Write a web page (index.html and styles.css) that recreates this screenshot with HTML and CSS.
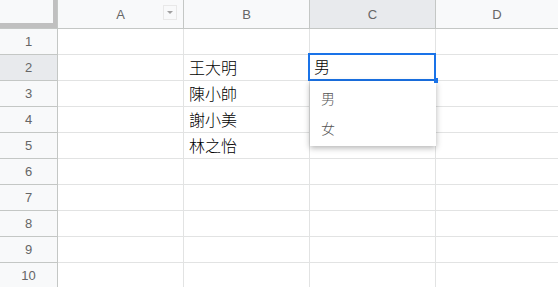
FILE: index.html
```html
<!DOCTYPE html>
<html lang="zh-Hant">
<head>
    <meta charset="UTF-8">
    <meta name="viewport" content="width=device-width, initial-scale=1.0">
    <title>Sheet</title>
    <link rel="stylesheet" href="styles.css">
</head>
<body>
    <div class="sheet">
        <!-- column headers -->
        <div class="corner"></div>
        <div class="col-head">A<span class="filter-btn"></span></div>
        <div class="col-head">B</div>
        <div class="col-head active">C</div>
        <div class="col-head last">D</div>

        <!-- row 1 -->
        <div class="row-head">1</div>
        <div class="cell"></div>
        <div class="cell"></div>
        <div class="cell"></div>
        <div class="cell last"></div>

        <!-- row 2 -->
        <div class="row-head active">2</div>
        <div class="cell"></div>
        <div class="cell">王大明</div>
        <div class="cell editing">
            <div class="selection">男</div>
            <span class="fill-handle"></span>
            <ul class="dropdown">
                <li>男</li>
                <li>女</li>
            </ul>
        </div>
        <div class="cell last"></div>

        <!-- row 3 -->
        <div class="row-head">3</div>
        <div class="cell"></div>
        <div class="cell">陳小帥</div>
        <div class="cell"></div>
        <div class="cell last"></div>

        <!-- row 4 -->
        <div class="row-head">4</div>
        <div class="cell"></div>
        <div class="cell">謝小美</div>
        <div class="cell"></div>
        <div class="cell last"></div>

        <!-- row 5 -->
        <div class="row-head">5</div>
        <div class="cell"></div>
        <div class="cell">林之怡</div>
        <div class="cell"></div>
        <div class="cell last"></div>

        <div class="row-head">6</div>
        <div class="cell"></div>
        <div class="cell"></div>
        <div class="cell"></div>
        <div class="cell last"></div>

        <div class="row-head">7</div>
        <div class="cell"></div>
        <div class="cell"></div>
        <div class="cell"></div>
        <div class="cell last"></div>

        <div class="row-head">8</div>
        <div class="cell"></div>
        <div class="cell"></div>
        <div class="cell"></div>
        <div class="cell last"></div>

        <div class="row-head">9</div>
        <div class="cell"></div>
        <div class="cell"></div>
        <div class="cell"></div>
        <div class="cell last"></div>

        <div class="row-head">10</div>
        <div class="cell"></div>
        <div class="cell"></div>
        <div class="cell"></div>
        <div class="cell last"></div>
    </div>
</body>
</html>
```

FILE: styles.css
```css
body, html {
    margin: 0;
    padding: 0;
    height: 100%;
    overflow: hidden;
    background: #fff;
    font-family: "Liberation Sans", Arial, "Noto Sans CJK TC", sans-serif;
}

.sheet {
    display: grid;
    grid-template-columns: 58px 126px 126px 126px 1fr;
    grid-template-rows: 29px repeat(10, 26px);
}

/* header row + row numbers */
.corner {
    background: #f8f9fa;
    border-right: 1px solid #c4c7c5;
    border-bottom: 1px solid #c4c7c5;
    position: relative;
}

    .corner::before {
        content: "";
        position: absolute;
        top: 0;
        right: 0;
        width: 4px;
        height: 28px;
        background: #c0c0c0;
    }

    .corner::after {
        content: "";
        position: absolute;
        left: 0;
        top: 23px;
        width: 57px;
        height: 5px;
        background: #c0c0c0;
    }

.col-head {
    position: relative;
    display: flex;
    align-items: center;
    justify-content: center;
    background: #f8f9fa;
    color: #666;
    font-size: 13px;
    border-right: 1px solid #c4c7c5;
    border-bottom: 1px solid #c4c7c5;
}

    .col-head.active {
        background: #e8eaed;
    }

    .col-head.last, .cell.last {
        border-right: none;
    }

.filter-btn {
    position: absolute;
    top: 5px;
    right: 6px;
    width: 14px;
    height: 15px;
    border: 1px solid #e8e8e8;
    box-sizing: border-box;
}

    .filter-btn::after {
        content: "";
        position: absolute;
        left: 3px;
        top: 5px;
        border-left: 3px solid transparent;
        border-right: 3px solid transparent;
        border-top: 3px solid #a0a0a0;
    }

.row-head {
    display: flex;
    align-items: center;
    justify-content: center;
    background: #f8f9fa;
    color: #666;
    font-size: 13px;
    border-right: 1px solid #c4c7c5;
    border-bottom: 1px solid #c4c7c5;
}

    .row-head.active {
        background: #e8eaed;
    }

/* cells */
.cell {
    display: flex;
    align-items: center;
    padding-left: 5px;
    padding-bottom: 2px;
    box-sizing: border-box;
    font-size: 16px;
    font-weight: 300;
    color: #000;
    font-family: "Noto Sans CJK TC", sans-serif;
    border-right: 1px solid #e2e3e3;
    border-bottom: 1px solid #e2e3e3;
}

.cell.editing {
    position: relative;
    z-index: 2;
}

.selection {
    position: absolute;
    top: -2px;
    left: -2px;
    right: -1px;
    bottom: -1px;
    border: 2px solid #1a73e8;
    background: #fff;
    display: flex;
    align-items: center;
    padding-left: 4px;
    padding-bottom: 2px;
}

.fill-handle {
    position: absolute;
    right: -3px;
    bottom: -3px;
    width: 4px;
    height: 5px;
    background: #1a73e8;
    z-index: 1;
}

.dropdown {
    position: absolute;
    top: 26px;
    left: 0;
    width: 126px;
    margin: 0;
    padding: 2px 0 3px;
    list-style: none;
    background: #fff;
    box-shadow: 0 2px 6px rgba(0, 0, 0, 0.3);
}

    .dropdown li {
        height: 30px;
        line-height: 30px;
        padding-left: 11px;
        font-size: 14px;
        color: #555;
    }
```
